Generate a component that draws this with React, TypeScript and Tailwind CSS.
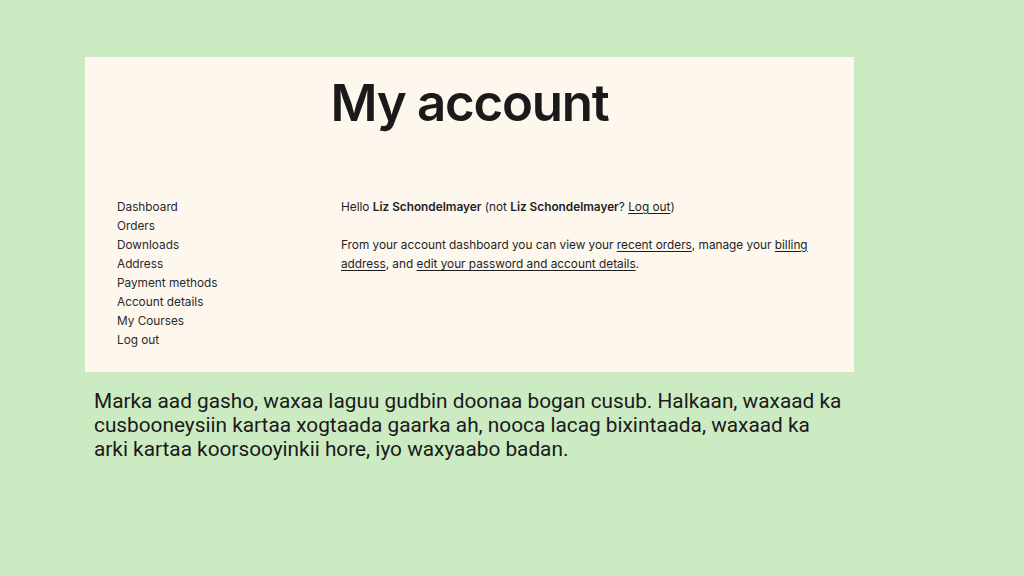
const menu = [
  "Dashboard",
  "Orders",
  "Downloads",
  "Address",
  "Payment methods",
  "Account details",
  "My Courses",
  "Log out",
];

export default function App() {
  return (
    <div className="h-[576px] w-[1024px] overflow-hidden bg-[#cdebc3] pt-[57px] font-['Inter',sans-serif]">
      <section className="ml-[85px] h-[315px] w-[769px] bg-[#fdf7ee] text-[#1e1e1e]">
        <h1 className="pt-[17px] text-center text-[51px] font-semibold leading-[58px] tracking-[-0.025em] text-[#1a1a1a]">
          My account
        </h1>
        <div className="mt-[66px] flex text-[11.8px] leading-[19px]">
          <nav className="ml-[32px] w-[224px]">
            <ul>
              {menu.map((m) => (
                <li key={m}>
                  <a href="#" className="text-[#2a2a2a]">
                    {m}
                  </a>
                </li>
              ))}
            </ul>
          </nav>
          <div className="w-[475px]">
            <p>
              Hello <strong className="font-semibold">Liz Schondelmayer</strong> (not{" "}
              <strong className="font-semibold">Liz Schondelmayer</strong>?{" "}
              <a href="#" className="underline underline-offset-2">
                Log out
              </a>
              )
            </p>
            <p className="mt-[19px]">
              From your account dashboard you can view your{" "}
              <a href="#" className="underline underline-offset-2">
                recent orders
              </a>
              , manage your{" "}
              <a href="#" className="underline underline-offset-2">
                billing address
              </a>
              , and{" "}
              <a href="#" className="underline underline-offset-2">
                edit your password and account details
              </a>
              .
            </p>
          </div>
        </div>
      </section>
      <p className="ml-[94px] mt-[17px] w-[800px] font-['Roboto',sans-serif] text-[20.8px] leading-[24px] text-[#1a1a1a]">
        Marka aad gasho, waxaa laguu gudbin doonaa bogan cusub. Halkaan, waxaad ka
        <br />
        cusbooneysiin kartaa xogtaada gaarka ah, nooca lacag bixintaada, waxaad ka
        <br />
        arki kartaa koorsooyinkii hore, iyo waxyaabo badan.
      </p>
    </div>
  );
}
